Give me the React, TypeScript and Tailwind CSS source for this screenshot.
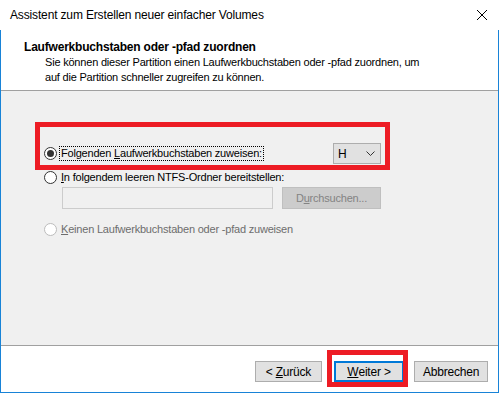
import React from "react";

const font = { fontFamily: '"Liberation Sans", Arial, sans-serif' };

function Radio({ checked, disabled }: { checked?: boolean; disabled?: boolean }) {
  return (
    <span
      className={`flex h-[13px] w-[13px] shrink-0 items-center justify-center rounded-full border bg-white ${
        disabled ? "border-[#bcbcbc]" : "border-[#333333]"
      }`}
    >
      {checked && <span className="h-[7px] w-[7px] rounded-full bg-[#333333]" />}
    </span>
  );
}

function Btn({ children, primary }: { children: React.ReactNode; primary?: boolean }) {
  return (
    <div
      className={`flex h-[21px] items-center justify-center bg-[#e1e1e1] text-[12px] tracking-[-0.2px] text-black ${
        primary ? "border-2 border-[#0078d7]" : "border border-[#adadad]"
      }`}
    >
      {children}
    </div>
  );
}

export default function App() {
  return (
    <div className="relative h-[393px] w-[499px] overflow-hidden bg-white" style={font}>
      {/* title bar */}
      <div className="flex h-[30px] items-center justify-between pl-[10px] pr-[10px]">
        <span className="text-[12px] tracking-[-0.15px] text-black">Assistent zum Erstellen neuer einfacher Volumes</span>
        <svg width="12" height="12" viewBox="0 0 12 12" className="mr-[1px]">
          <path d="M1 1L11 11M11 1L1 11" stroke="#000" strokeWidth="1" />
        </svg>
      </div>

      <div className="flex h-[363px] flex-col border-x border-b border-[#1883d7]">
        {/* header */}
        <div className="h-[61px] border-b border-[#a0a0a0] bg-white pl-[23px] pt-[10px] tracking-[-0.2px]">
          <div className="text-[12px] font-bold leading-[15px] text-black">
            Laufwerkbuchstaben oder -pfad zuordnen
          </div>
          <div className="pl-[21px] text-[11px] leading-[15px] text-black">
            Sie können dieser Partition einen Laufwerkbuchstaben oder -pfad zuordnen, um
            <br />
            auf die Partition schneller zugreifen zu können.
          </div>
        </div>

        {/* content */}
        <div className="flex-1 border-b border-[#a0a0a0] bg-[#f0f0f0] pl-[43px] pt-[52px] text-[11px] tracking-[-0.2px]">
          <div className="flex h-[21px] w-[337px] items-center justify-between">
            <div className="flex items-center">
              <Radio checked />
              <span className="ml-[2px] border border-dotted border-black px-[1px] leading-[13px] text-black">
                Folgenden <span className="underline">L</span>aufwerkbuchstaben zuweisen:
              </span>
            </div>
            <div className="flex h-[21px] w-[48px] items-center justify-between border border-[#adadad] bg-[#e1e1e1] pl-[4px] pr-[5px]">
              <span className="text-[12px] text-black">H</span>
              <svg width="9" height="6" viewBox="0 0 9 6">
                <path d="M0.5 0.5L4.5 4.5L8.5 0.5" fill="none" stroke="#333" strokeWidth="1" />
              </svg>
            </div>
          </div>
          <div className="mt-[5px] flex h-[16px] items-center">
            <Radio />
            <span className="ml-[4px] text-black">
              <span className="underline">I</span>n folgendem leeren NTFS-Ordner bereitstellen:
            </span>
          </div>
          <div className="ml-[18px] mt-[2px] flex gap-[9px]">
            <div className="h-[22px] w-[211px] border border-[#cccccc] bg-[#f0f0f0]" />
            <div className="flex h-[22px] w-[99px] items-center justify-center border border-[#bfbfbf] bg-[#cccccc] text-[#838383]">
              D<span className="underline">u</span>rchsuchen...
            </div>
          </div>
          <div className="mt-[12px] flex h-[16px] items-center">
            <Radio disabled />
            <span className="ml-[4px] text-[#6d6d6d]">
              <span className="underline">K</span>einen Laufwerkbuchstaben oder -pfad zuweisen
            </span>
          </div>
        </div>

        {/* footer */}
        <div className="flex h-[46px] items-start justify-end gap-[10px] pr-[10px] pt-[15px]">
          <div className="w-[67px]">
            <Btn>
              &lt; <span className="ml-[3px] underline">Z</span>urück
            </Btn>
          </div>
          <div className="ml-[2px] w-[70px]">
            <Btn primary>
              <span className="underline">W</span>eiter &gt;
            </Btn>
          </div>
          <div className="w-[74px]">
            <Btn>Abbrechen</Btn>
          </div>
        </div>
      </div>

      {/* red annotation boxes */}
      <div className="pointer-events-none absolute left-[35px] top-[122px] h-[48px] w-[355px] border-[5px] border-[#ed1c24]" />
      <div className="pointer-events-none absolute left-[327px] top-[350px] h-[37px] w-[81px] border-[5px] border-[#ed1c24]" />
    </div>
  );
}
